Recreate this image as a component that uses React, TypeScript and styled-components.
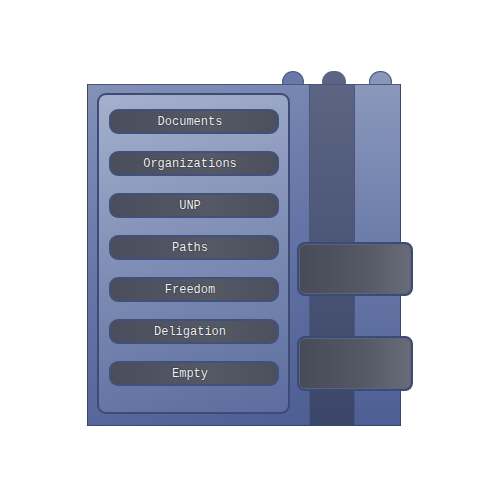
import styled, { createGlobalStyle } from 'styled-components';

const GlobalStyle = createGlobalStyle`
  body {
    margin: 0;
    background: #ffffff;
    font-family: "Liberation Mono", "DejaVu Sans Mono", monospace;
  }
`;

const Page = styled.div`
  width: 500px;
  height: 500px;
  padding: 71px 0 0 87px;
  box-sizing: border-box;
`;

const Cabinet = styled.div`
  position: relative;
  width: 314px;
  display: flex;
  flex-direction: column;
`;

const TabRow = styled.div`
  height: 13px;
  display: flex;
  align-items: flex-end;
`;

const tabFill = { mid: '#6878a8', dark: '#5b6482', light: '#8896ba' };

const Tab = styled.div<{ $at: number; $w: number; $tone: 'mid' | 'dark' | 'light' }>`
  flex-shrink: 0;
  margin-left: ${(p) => p.$at}px;
  width: ${(p) => p.$w}px;
  height: 14px;
  margin-bottom: -1px;
  box-sizing: border-box;
  border-radius: 12px 12px 3px 3px;
  background: ${(p) => tabFill[p.$tone]};
  border: 1px solid ${(p) => (p.$tone === 'dark' ? tabFill.dark : '#4a5680')};
  border-bottom: none;
`;

const Body = styled.div`
  position: relative;
  z-index: 1;
  height: 342px;
  display: flex;
  border: 1px solid #3c4770;
  border-top-color: #4a5680;
  box-sizing: border-box;
`;

const LeftPane = styled.div`
  width: 221px;
  padding: 8px 0 0 9px;
  box-sizing: border-box;
  background: linear-gradient(160deg, #8391b8 0%, #6777a8 45%, #4d5e94 100%);
`;

const Drawer = styled.div`
  width: 193px;
  height: 321px;
  box-sizing: border-box;
  border: 2px solid #3f4b74;
  border-radius: 9px;
  background: linear-gradient(165deg, #a4b0cc 0%, #8694b9 40%, #5b6c9e 100%);
  padding: 14px 0 0 10px;
  display: flex;
  flex-direction: column;
  gap: 17px;
`;

const Button = styled.div`
  width: 170px;
  height: 25px;
  box-sizing: border-box;
  padding-right: 8px;
  border: 2px solid #43507c;
  border-radius: 9px;
  background: linear-gradient(90deg, #4a4e5c 0%, #555966 60%, #4c505d 100%);
  color: #f4f4f4;
  font-family: "Liberation Mono", "DejaVu Sans Mono", monospace;
  font-size: 12px;
  text-shadow: 0 0 1px #1c1f28, 0 0 1px #1c1f28;
  display: flex;
  align-items: center;
  justify-content: center;
`;

const Strip = styled.div`
  width: 44px;
  background: linear-gradient(180deg, #5b6482 0%, #4b5576 50%, #3a4668 100%);
  border-left: 1px solid #4c5680;
`;

const RightCol = styled.div`
  flex: 1;
  background: linear-gradient(180deg, #8a98bc 0%, #7080ac 40%, #4c5e94 100%);
  border-left: 1px solid #4a5680;
`;

const Card = styled.div<{ $top: number; $h: number }>`
  position: absolute;
  z-index: 2;
  left: 210px;
  top: ${(p) => p.$top}px;
  width: 116px;
  height: ${(p) => p.$h}px;
  box-sizing: border-box;
  border: 2px solid #3a4a7a;
  border-radius: 8px;
  background: linear-gradient(90deg, #474b57 0%, #545865 55%, #686c78 100%);
  box-shadow: inset 0 0 0 1px #5e6272;
`;

const items = ['Documents', 'Organizations', 'UNP', 'Paths', 'Freedom', 'Deligation', 'Empty'];

export default function App() {
  return (
    <>
      <GlobalStyle />
      <Page>
        <Cabinet>
          <TabRow>
            <Tab $at={195} $w={22} $tone="mid" />
            <Tab $at={18} $w={24} $tone="dark" />
            <Tab $at={23} $w={23} $tone="light" />
          </TabRow>
          <Body>
            <LeftPane>
              <Drawer>
                {items.map((label) => (
                  <Button key={label}>{label}</Button>
                ))}
              </Drawer>
            </LeftPane>
            <Strip />
            <RightCol />
          </Body>
          <Card $top={171} $h={54} />
          <Card $top={265} $h={55} />
        </Cabinet>
      </Page>
    </>
  );
}
